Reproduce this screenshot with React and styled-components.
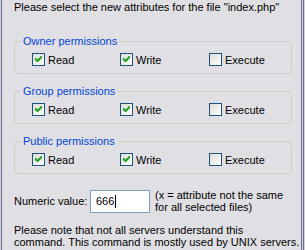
import styled, { createGlobalStyle } from 'styled-components';

const Global = createGlobalStyle`
  html, body {
    margin: 0;
    padding: 0;
    background: #e0dfe3;
  }
  body {
    font-family: "Liberation Sans", Arial, sans-serif;
    font-size: 11px;
    color: #000;
  }
`;

const Window = styled.div`
  width: 305px;
  height: 250px;
  box-sizing: border-box;
  background: #e0dfe3;
  overflow: hidden;
  padding: 1px 0 0 14px;
  white-space: nowrap;
  display: flex;
  flex-direction: column;
  align-items: flex-start;
  box-shadow: inset 1px 0 0 #d2d1d9, inset 2px 0 0 #6e7092, inset -1px 0 0 #d2d1d9,
    inset -2px 0 0 #6e7092, inset -3px 0 0 #d2d1d9, inset -4px 0 0 #6e7092;
`;

const Intro = styled.div`
  line-height: 13px;
  margin-bottom: 21px;
`;

const Group = styled.fieldset`
  margin: 0 0 11px 0;
  padding: 5px 0 7px 6px;
  border: 1px solid #d0d0bf;
  border-radius: 4px;
  width: 278px;
  height: 39px;
  box-sizing: border-box;
`;

const Legend = styled.legend`
  color: #0046d5;
  padding: 0 2px;
  margin: 0;
  line-height: 13px;
`;

const Row = styled.div`
  display: grid;
  grid-template-columns: 88px 89px 1fr;
  align-items: center;
  padding-left: 11px;
`;

const Option = styled.label`
  display: flex;
  align-items: center;
  gap: 3px;
  height: 13px;
`;

const Box = styled.span`
  width: 11px;
  height: 11px;
  border: 1px solid #1c5180;
  background: linear-gradient(135deg, #dcdcd7 0%, #fff 100%);
  display: flex;
  align-items: center;
  justify-content: center;
`;

const Check = () => (
  <svg width="7" height="7" viewBox="0 0 7 7">
    <path d="M0 2 L0 4 L2 6 L3 6 L7 2 L7 0 L6 0 L2.5 3.5 L1 2 Z" fill="#21a121" />
  </svg>
);

const Checkbox = ({ checked, label }) => (
  <Option>
    <Box>{checked && <Check />}</Box>
    {label}
  </Option>
);

const NumericRow = styled.div`
  display: flex;
  align-items: center;
  margin-top: 4px;
`;

const NumLabel = styled.span`
  width: 76px;
  line-height: 13px;
`;

const Input = styled.div`
  width: 60px;
  height: 23px;
  box-sizing: border-box;
  border: 1px solid #7f9db9;
  background: #fff;
  padding: 0 5px;
  display: flex;
  align-items: center;
`;

const Caret = styled.span`
  width: 1px;
  height: 13px;
  background: #000;
  margin-left: 1px;
`;

const Hint = styled.div`
  margin-left: 5px;
  line-height: 12px;
`;

const Note = styled.div`
  margin-top: 11px;
  line-height: 12px;
`;

const groups = ['Owner permissions', 'Group permissions', 'Public permissions'];

export default function App() {
  return (
    <Window>
      <Global />
      <Intro>Please select the new attributes for the file "index.php"</Intro>
      {groups.map((g) => (
        <Group key={g}>
          <Legend>{g}</Legend>
          <Row>
            <Checkbox checked label="Read" />
            <Checkbox checked label="Write" />
            <Checkbox label="Execute" />
          </Row>
        </Group>
      ))}
      <NumericRow>
        <NumLabel>Numeric value:</NumLabel>
        <Input>
          666
          <Caret />
        </Input>
        <Hint>
          (x = attribute not the same
          <br />
          for all selected files)
        </Hint>
      </NumericRow>
      <Note>
        Please note that not all servers understand this
        <br />
        command. This command is mostly used by UNIX servers.
      </Note>
    </Window>
  );
}
